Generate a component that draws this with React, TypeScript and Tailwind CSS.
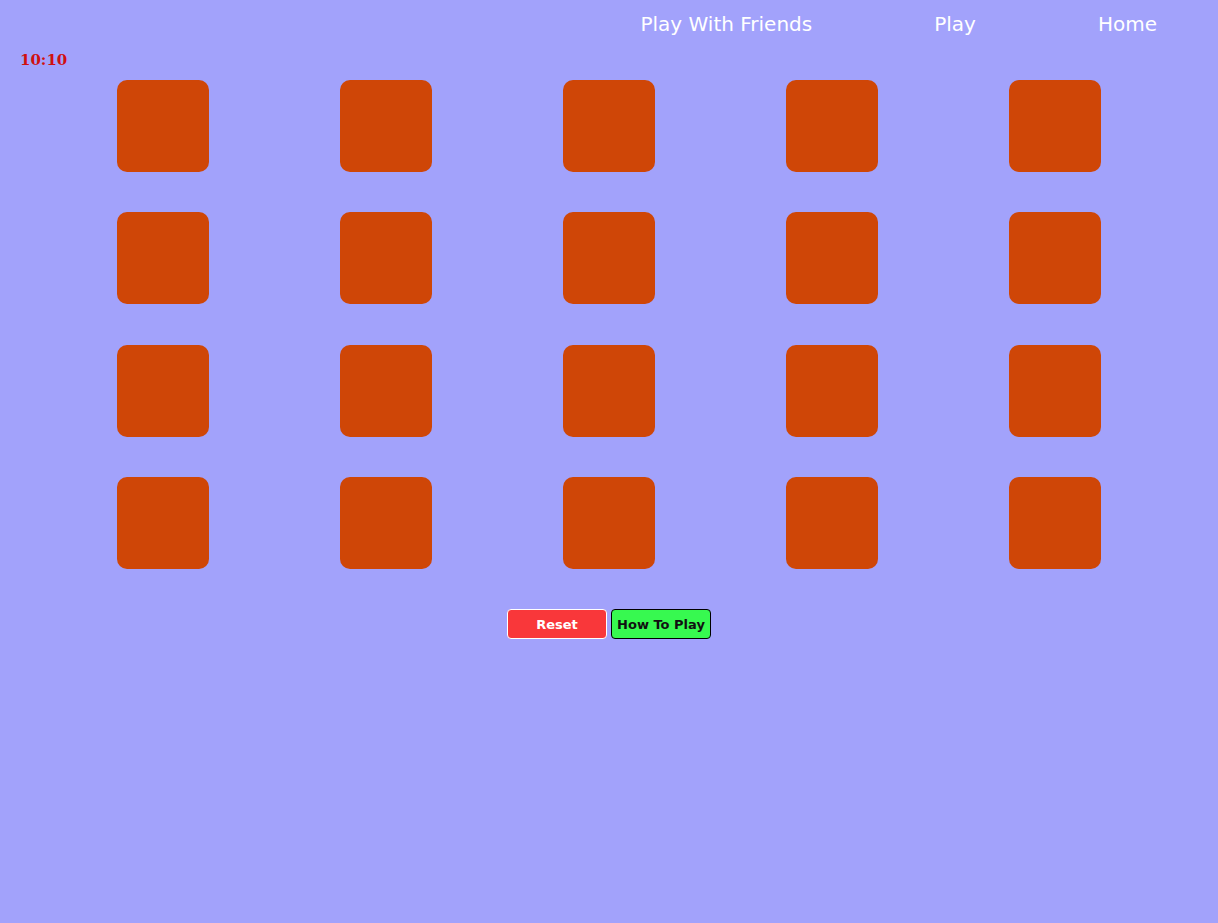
export default function App() {
  const tiles = Array.from({ length: 20 }, (_, i) => i);

  return (
    <div className="min-h-[923px] w-full bg-[#a2a2fb] font-['DejaVu_Sans',sans-serif]">
      {/* nav */}
      <nav className="flex h-[48px] items-center justify-end gap-[122px] pr-[61px] text-[20px] text-white">
        <a className="cursor-pointer">Play With Friends</a>
        <a className="cursor-pointer">Play</a>
        <a className="cursor-pointer">Home</a>
      </nav>

      {/* timer */}
      <div className="flex h-[24px] items-center pl-[20px] font-['DejaVu_Serif',serif] text-[15px] leading-none font-bold text-[#d01010]">
        10:10
      </div>
      <div className="h-[8px]" />

      {/* board */}
      <div className="grid grid-cols-5 justify-items-center gap-y-[40.3px] px-[52px]">
        {tiles.map((t) => (
          <div key={t} className="h-[92px] w-[92px] rounded-[10px] bg-[#cf4607]" />
        ))}
      </div>

      {/* controls */}
      <div className="mt-[40px] flex justify-center gap-[4px]">
        <button className="h-[30px] w-[100px] rounded-[4px] border border-white bg-[#f9373a] pt-[2px] text-[13px] font-bold text-white">
          Reset
        </button>
        <button className="h-[30px] w-[100px] rounded-[4px] border border-black bg-[#37f950] pt-[2px] text-[13px] font-bold text-[#111]">
          How To Play
        </button>
      </div>
    </div>
  );
}
